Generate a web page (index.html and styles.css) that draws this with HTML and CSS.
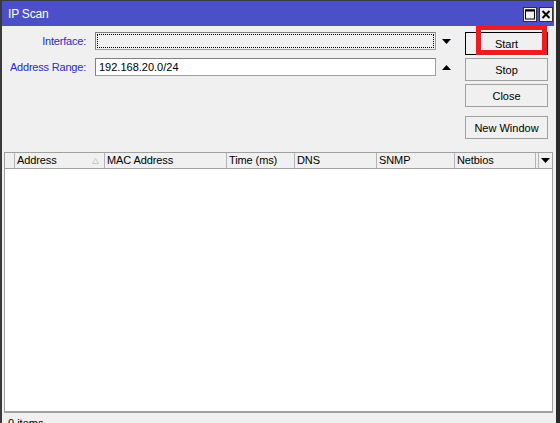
FILE: index.html
```html
<!DOCTYPE html>
<html>
<head>
<meta charset="utf-8">
<link rel="stylesheet" href="styles.css">
</head>
<body>
<div class="win">
  <div class="titlebar">
    <span class="title">IP Scan</span>
    <div class="tbtns">
      <span class="tbtn"><svg width="12" height="13" viewBox="0 0 12 13"><rect x="1.5" y="2" width="9" height="9" fill="none" stroke="#000" stroke-width="1"/><rect x="1" y="1.5" width="10" height="2" fill="#000"/></svg></span>
      <span class="tbtn"><svg width="12" height="13" viewBox="0 0 12 13"><path d="M2.5 3 L9.5 10 M9.5 3 L2.5 10" stroke="#000" stroke-width="2"/></svg></span>
    </div>
  </div>
  <div class="top">
    <div class="form">
      <div class="row">
        <span class="lbl">Interface:</span>
        <div class="field combo"><div class="focus"></div></div>
        <div class="arrow"><svg width="9" height="5" viewBox="0 0 9 5"><polygon points="0,0 9,0 4.5,5" fill="#000"/></svg></div>
      </div>
      <div class="row">
        <span class="lbl">Address Range:</span>
        <div class="field text">192.168.20.0/24</div>
        <div class="arrow"><svg width="9" height="5" viewBox="0 0 9 5"><polygon points="0,5 9,5 4.5,0" fill="#000"/></svg></div>
      </div>
    </div>
    <div class="btns">
      <div class="btn default">Start</div>
      <div class="btn">Stop</div>
      <div class="btn">Close</div>
      <div class="btn spaced">New Window</div>
    </div>
  </div>
  <div class="table">
    <div class="thead">
      <div class="th c0"></div>
      <div class="th c1">Address<svg class="sort" width="7" height="6" viewBox="0 0 7 6"><polygon points="0.5,5.5 6.5,5.5 3.5,0.5" fill="none" stroke="#c8c8c8" stroke-width="1"/></svg></div>
      <div class="th c2">MAC Address</div>
      <div class="th c3">Time (ms)</div>
      <div class="th c4">DNS</div>
      <div class="th c5">SNMP</div>
      <div class="th c6">Netbios</div>
      <div class="th c7"></div>
      <div class="th c8"><svg width="9" height="5" viewBox="0 0 9 5"><polygon points="0,0 9,0 4.5,5" fill="#000"/></svg></div>
    </div>
    <div class="tbody"></div>
  </div>
  <div class="status">0 items</div>
</div>
<div class="mark"></div>
</body>
</html>
```

FILE: styles.css
```css
html, body {
  margin: 0;
  padding: 0;
}
body {
  width: 560px;
  height: 423px;
  overflow: hidden;
  background: #2b2b2b;
  font-family: "Liberation Sans", Arial, sans-serif;
  font-size: 11px;
  color: #000;
  position: relative;
}
.win {
  box-sizing: border-box;
  width: 560px;
  height: 423px;
  border-left: 2px solid #3a3a3a;
  border-top: 1px solid #3a3a3a;
  border-right: 4px solid #2b2b2b;
  padding-right: 2px;
  background: #f0f0f0;
  display: flex;
  flex-direction: column;
}
.titlebar {
  height: 25px;
  background: #4b50c8;
  display: flex;
  align-items: center;
  justify-content: space-between;
  padding-left: 6px;
  padding-right: 1px;
  flex: none;
}
.title {
  color: #fff;
  font-size: 12px;
  letter-spacing: -0.2px;
}
.tbtns {
  display: flex;
  gap: 2px;
  margin-top: 1px;
}
.tbtn {
  box-sizing: border-box;
  width: 14px;
  height: 15px;
  background: #f0f0f0;
  border: 1px solid #303030;
  display: flex;
  align-items: center;
  justify-content: center;
}
.tbtn svg {
  display: block;
}
.top {
  display: flex;
  padding-top: 6px;
  flex: none;
}
.form {
  display: flex;
  flex-direction: column;
  gap: 8px;
}
.row {
  display: flex;
  align-items: center;
  height: 18px;
}
.lbl {
  width: 84px;
  text-align: right;
  color: #2a2ad2;
  margin-right: 9px;
  white-space: nowrap;
  letter-spacing: -0.2px;
}
.field {
  box-sizing: border-box;
  width: 341px;
  height: 18px;
  border: 1px solid #a0a0a0;
  border-top-color: #808080;
  border-left-color: #808080;
}
.combo {
  background: #f0f0f0;
  padding: 1px;
}
.focus {
  box-sizing: border-box;
  width: 100%;
  height: 100%;
  border: 1px dotted #000;
}
.text {
  background: #fff;
  padding-left: 3px;
  line-height: 16px;
}
.arrow {
  width: 29px;
  display: flex;
  justify-content: center;
  padding-right: 8px;
  box-sizing: border-box;
}
.arrow svg {
  display: block;
}
.btns {
  display: flex;
  flex-direction: column;
  gap: 3px;
  width: 83px;
}
.btn {
  box-sizing: border-box;
  height: 23px;
  border: 1px solid #a0a0a0;
  background: #f0f0f0;
  display: flex;
  align-items: center;
  justify-content: center;
  font-size: 11px;
}
.btn.default {
  border-color: #000;
}
.btn.spaced {
  margin-top: 6px;
}
.table {
  margin-top: 13px;
  margin-left: 2px;
  margin-right: 1px;
  height: 261px;
  display: flex;
  flex-direction: column;
  border-left: 1px solid #a0a0a0;
  border-right: 1px solid #a0a0a0;
  border-bottom: 2px solid #a0a0a0;
  box-sizing: border-box;
  flex: none;
}
.thead {
  display: flex;
  height: 17px;
  box-sizing: border-box;
  border-top: 1px solid #a0a0a0;
  border-bottom: 1px solid #a0a0a0;
  background: #f0f0f0;
  flex: none;
}
.th {
  box-sizing: border-box;
  border-right: 1px solid #b4b4b4;
  padding-left: 2px;
  line-height: 15px;
  white-space: nowrap;
  position: relative;
  font-size: 11px;
  letter-spacing: -0.1px;
}
.c0 { width: 10px; }
.c1 { width: 90px; }
.c2 { width: 122px; }
.c3 { width: 68px; }
.c4 { width: 82px; }
.c5 { width: 78px; }
.c6 { width: 81px; }
.c7 { width: 3px; padding: 0; }
.c8 {
  flex: 1;
  border-right: none;
  display: flex;
  align-items: center;
  justify-content: center;
  padding: 0;
}
.c8 svg { display: block; }
.sort {
  position: absolute;
  right: 5px;
  top: 5px;
}
.tbody {
  flex: 1;
  background: #fff;
}
.status {
  padding-left: 6px;
  padding-top: 4px;
  font-size: 11px;
}
.mark {
  position: absolute;
  left: 476px;
  top: 25px;
  width: 71px;
  height: 30px;
  box-sizing: border-box;
  border: 5px solid #ed1c24;
}
```
